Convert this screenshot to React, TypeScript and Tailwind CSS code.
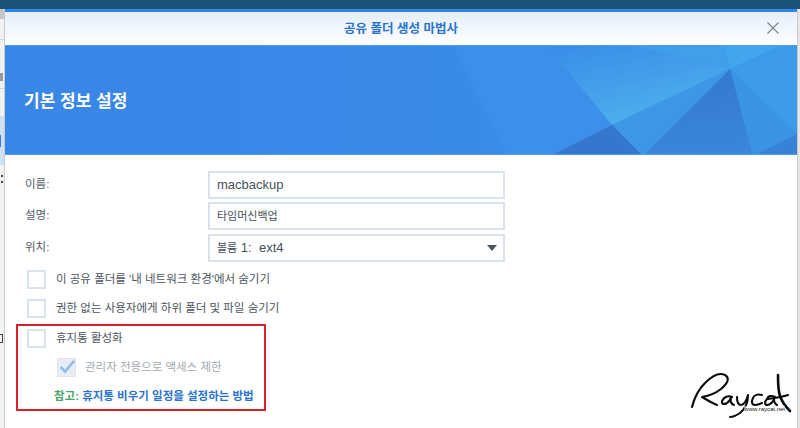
const font = { fontFamily: '"Liberation Sans", "Noto Sans CJK KR", sans-serif' };

function Banner() {
  return (
    <div className="relative h-[110px] shrink-0 border-y border-[#4a9df0] bg-[#3a8ae8] overflow-hidden">
      {/* faceted background */}
      <svg className="absolute inset-0" width="792" height="110" viewBox="0 0 792 110">
        <defs>
          <linearGradient id="base" x1="0" x2="1" y1="0" y2="0">
            <stop offset="0" stopColor="#3886e6" />
            <stop offset="0.6" stopColor="#3a8ae8" />
            <stop offset="1" stopColor="#3d92ea" />
          </linearGradient>
          <linearGradient id="glow" x1="0.2" x2="0.7" y1="0" y2="1">
            <stop offset="0" stopColor="#3b8fe9" />
            <stop offset="1" stopColor="#4fb3ed" />
          </linearGradient>
          <linearGradient id="dark" x1="0.5" x2="0.6" y1="0" y2="1">
            <stop offset="0" stopColor="#3379cf" />
            <stop offset="1" stopColor="#3a86dc" />
          </linearGradient>
        </defs>
        <rect width="792" height="110" fill="url(#base)" />
        <polygon points="448,0 542,0 607,79 545,110 502,110" fill="#3c90ea" />
        <polygon points="542,0 632,0 725,23 607,79" fill="url(#glow)" />
        <polygon points="632,0 720,0 725,23" fill="#3f9fea" />
        <polygon points="720,0 775,0 725,23" fill="#42a5f0" />
        <polygon points="775,0 792,0 792,88 725,23" fill="#3c9aeb" />
        <polygon points="725,23 792,88 748,110" fill="#3b93e6" />
        <polygon points="792,88 792,110 748,110" fill="#3782d8" />
        <polygon points="725,23 748,110 638,110" fill="url(#dark)" />
        <polygon points="607,79 725,23 638,110" fill="#3d97e6" />
        <polygon points="607,79 638,110 545,110" fill="#3577cf" />
      </svg>
      <h2 className="relative ml-[19px] mt-[46px] text-[17px] leading-[20px] font-bold text-white">기본 정보 설정</h2>
    </div>
  );
}

function Field({ label, className, children }: { label: string; className?: string; children: React.ReactNode }) {
  return (
    <div className={`flex items-center h-[28px] ${className ?? ""}`}>
      <span className="w-[203px] pl-[20px] text-[11.5px] text-[#505a66]">{label}</span>
      <div className="flex items-center justify-between w-[297px] h-[28px] border-2 border-[#d9e2ee] pl-[7px] pr-[6px] text-[13px] text-[#45505c]">
        {children}
      </div>
    </div>
  );
}

function Check({ label, className }: { label: string; className?: string }) {
  return (
    <div className={`flex items-center h-[19px] pl-[22px] ${className ?? ""}`}>
      <span className="w-[19px] h-[19px] border-2 border-[#d9e2ee] bg-white" />
      <span className="ml-[10px] text-[11.5px] text-[#4c5560]">{label}</span>
    </div>
  );
}

function RaycatLogo() {
  return (
    <div className="absolute right-[2px] bottom-[3px] w-[112px] h-[56px]">
      <svg width="112" height="56" viewBox="0 0 112 56" fill="none" stroke="#0b0b0b" strokeWidth="2.1" strokeLinecap="round" strokeLinejoin="round">
        <path d="M9 38 C11 30 15 21 22 14 C28 8 36 3 42 6 C47 9 45 14 38 20 C33 24 25 27 19 28 C24 31 29 34 34 36" />
        <path d="M49 28 C45 26 41 28 39 32 C38 36 43 36 46 32 C47 31 47 30 48 29 C47 32 48 35 51 36" />
        <path d="M54 28 C54 32 55 36 58 36 C61 36 64 31 65 26 C65 33 62 40 57 44 C54 46 50 48 47 48" />
        <path d="M79 26 C75 25 71 26 70 29 C68 33 69 36 72 36 C75 36 77 35 79 34" />
        <path d="M92 28 C88 26 85 27 84 30 C81 33 82 36 84 36 C87 36 90 33 91 30 C91 33 92 35 94 36" />
        <path d="M85 30 C92 29 99 28 105 26" />
        <path d="M95 6 C95 14 95 21 97 27 C99 33 103 38 107 42" strokeWidth="2.6" />
      </svg>
      <span className="absolute right-[10px] bottom-[12px] bg-white/60 text-[6px] leading-[7px] text-[#222]">www.raycat.net</span>
    </div>
  );
}

// what shows of the app window behind the dialog, left side
function LeftEdge() {
  return (
    <div className="flex flex-col w-[5px] shrink-0 overflow-hidden bg-[#f1f2f3] border-r border-[#c9cbcd]">
      <div className="h-[10px] shrink-0 bg-[#c4c6c8]" />
      <div className="h-[21px] shrink-0 border-b border-[#d0d2d4]" />
      <div className="h-[25px] shrink-0" />
      <div className="flex items-center h-[24px] shrink-0 border-b border-[#d0d2d4]">
        <span className="w-[3px] h-[8px] bg-[#9a9a9a]" />
      </div>
      <div className="h-[27px] shrink-0" />
      <div className="flex items-center h-[49px] shrink-0 bg-[#cfe0f0]">
        <span className="w-[1px] h-[12px] bg-[#2f80e0]" />
      </div>
      <div className="h-[10px] shrink-0" />
      <div className="flex flex-col justify-between w-[2px] h-[8px] ml-[1px] shrink-0">
        <span className="h-[2px] bg-[#444]" />
        <span className="h-[2px] bg-[#444]" />
      </div>
      <div className="h-[151px] shrink-0" />
      <div className="w-[3px] h-[9px] shrink-0 border-y border-r border-[#444]" />
    </div>
  );
}

export default function App() {
  return (
    <div className="flex flex-col w-[800px] h-[428px] overflow-hidden bg-white" style={font}>
      <div className="h-[9px] bg-[#1b5277] shrink-0" />
      <div className="flex flex-1 min-h-0">
        <LeftEdge />
        <div className="relative flex-1 flex flex-col bg-white border-t-[3px] border-[#2f86e6]">
          <div className="relative flex items-center justify-center h-[33px] shrink-0 bg-gradient-to-b from-[#e3eefa] to-white">
            <h1 className="mt-[1px] text-[12.5px] font-bold text-[#2a74cf]">공유 폴더 생성 마법사</h1>
            <svg className="absolute right-[18px] top-[10px]" width="12" height="12" viewBox="0 0 12 12" stroke="#7c8288" strokeWidth="1.1" fill="none">
              <path d="M0.5 0.5 L11.5 11.5 M11.5 0.5 L0.5 11.5" />
            </svg>
          </div>
          <Banner />
          <div className="flex flex-col pt-[16px]">
            <Field label="이름:"><span>macbackup</span></Field>
            <Field label="설명:" className="mt-[3px]"><span className="text-[11px]">타임머신백업</span></Field>
            <Field label="위치:" className="mt-[4px]">
              <span><span className="text-[11px]">볼륨</span> 1:&nbsp; ext4</span>
              <span className="w-0 h-0 border-x-[5px] border-x-transparent border-t-[6px] border-t-[#4a5560]" />
            </Field>
            <Check label="이 공유 폴더를 '내 네트워크 환경'에서 숨기기" className="mt-[8px]" />
            <Check label="권한 없는 사용자에게 하위 폴더 및 파일 숨기기" className="mt-[10px]" />
            <div className="flex flex-col w-[250px] h-[87px] ml-[11px] mt-[6px] border-2 border-[#d81f2c]">
              <div className="flex items-center h-[19px] pl-[9px] mt-[3px]">
                <span className="w-[19px] h-[19px] border-2 border-[#d9e2ee] bg-white" />
                <span className="ml-[10px] text-[11.5px] text-[#4c5560]">휴지통 활성화</span>
              </div>
              <div className="flex items-center h-[19px] pl-[39px] mt-[10px]">
                <span className="flex items-center justify-center w-[19px] h-[19px] border border-[#dfe4ec] bg-[#e8edf4]">
                  <svg width="19" height="19" viewBox="0 0 19 19" fill="none" stroke="#8fbdec" strokeWidth="3">
                    <path d="M3 9 L8 14 L18 2" />
                  </svg>
                </span>
                <span className="ml-[9px] text-[11.5px] text-[#a4a9af]">관리자 전용으로 액세스 제한</span>
              </div>
              <p className="pl-[36px] mt-[11px] text-[11.5px] font-bold leading-[16px]">
                <span className="text-[#45a86a]">참고: </span>
                <span className="text-[#2a74cf]">휴지통 비우기 일정을 설정하는 방법</span>
              </p>
            </div>
          </div>
          <RaycatLogo />
        </div>
        <div className="w-[3px] bg-[#e6e6e6] border-l border-[#c9c9c9] shrink-0" />
      </div>
    </div>
  );
}
